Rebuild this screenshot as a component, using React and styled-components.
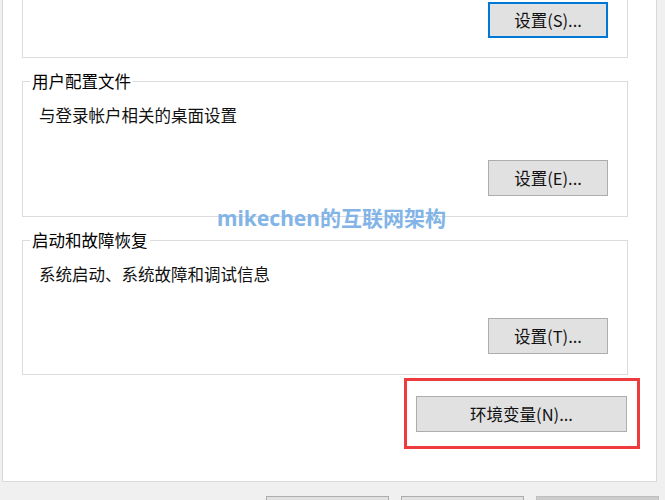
import React from "react";
import styled, { createGlobalStyle, css } from "styled-components";

const GlobalStyle = createGlobalStyle`
  html, body {
    margin: 0;
    padding: 0;
    background: #f0f0f0;
    overflow: hidden;
  }
  * { box-sizing: border-box; }
`;

const Window = styled.div`
  position: relative;
  width: 665px;
  height: 500px;
  overflow: hidden;
  padding-left: 2px;
  background: #f0f0f0;
  font-family: "Noto Sans CJK SC", "Noto Sans", sans-serif;
  font-size: 16.5px;
  line-height: 20px;
  color: #111;
`;

const TabPage = styled.div`
  width: 655px;
  height: 482px;
  background: #ffffff;
  border: 1px solid #d9d9d9;
  border-top: none;
  padding: 0 28px 0 19px;
  display: flex;
  flex-direction: column;
`;

const ClippedGroup = styled.div`
  border: 1px solid #dcdcdc;
  border-top: none;
  padding: 2px 19px 19px 16px;
  display: flex;
  justify-content: flex-end;
`;

const Group = styled.fieldset`
  margin: 13px 0 0 0;
  padding: 0;
  min-width: 0;
  border: 1px solid #dcdcdc;
`;

const Legend = styled.legend`
  margin-left: 7px;
  padding: 0 2px;
  line-height: 20px;
  color: #000;
`;

const GroupBody = styled.div`
  padding: 14px 19px 20px 16px;
  display: flex;
  flex-direction: column;
`;

const Desc = styled.div`
  line-height: 20px;
  color: #111;
`;

const ButtonRow = styled.div`
  display: flex;
  justify-content: flex-end;
  margin-top: ${(p) => p.$gap || 0}px;
`;

const Button = styled.button`
  width: ${(p) => p.$w || 120}px;
  height: 36px;
  font-family: inherit;
  font-size: 16.5px;
  line-height: 20px;
  color: #111;
  background: #e1e1e1;
  border: 1px solid #adadad;
  border-radius: 0;
  padding: 0;
  display: flex;
  align-items: center;
  justify-content: center;
  flex: none;
  ${(p) =>
    p.$focused &&
    css`
      border: 2px solid #0078d7;
    `}
  ${(p) =>
    p.$disabled &&
    css`
      background: #cccccc;
      border-color: #bfbfbf;
      color: #838383;
    `}
`;

const EnvRow = styled.div`
  display: flex;
  justify-content: flex-end;
  margin-top: 3px;
  margin-right: -12px;
`;

const Highlight = styled.div`
  border: 3px solid #ee3b3e;
  padding: 15px 10px 14px 9px;
  display: flex;
`;

const DialogButtons = styled.div`
  display: flex;
  justify-content: flex-end;
  gap: 12px;
  padding: 14px 6px 0 0;
`;

const Watermark = styled.div`
  position: absolute;
  left: 217px;
  top: 206px;
  font-family: "Noto Sans", "Noto Sans CJK SC", sans-serif;
  font-weight: 700;
  font-size: 21px;
  line-height: 24px;
  color: #82b4e7;
  white-space: nowrap;
  pointer-events: none;
`;

const sections = [
  { title: "用户配置文件", desc: "与登录帐户相关的桌面设置", btn: "设置(E)...", gap: 35 },
  { title: "启动和故障恢复", desc: "系统启动、系统故障和调试信息", btn: "设置(T)...", gap: 34 },
];

export default function App() {
  return (
    <>
      <GlobalStyle />
      <Window>
        <TabPage>
          <ClippedGroup>
            <Button $focused>设置(S)...</Button>
          </ClippedGroup>
          {sections.map((s) => (
            <Group key={s.title}>
              <Legend>{s.title}</Legend>
              <GroupBody>
                <Desc>{s.desc}</Desc>
                <ButtonRow $gap={s.gap}>
                  <Button>{s.btn}</Button>
                </ButtonRow>
              </GroupBody>
            </Group>
          ))}
          <EnvRow>
            <Highlight>
              <Button $w={211}>环境变量(N)...</Button>
            </Highlight>
          </EnvRow>
        </TabPage>
        <DialogButtons>
          <Button $w={123} aria-label="确定" />
          <Button $w={123} aria-label="取消" />
          <Button $w={123} $disabled aria-label="应用(A)" />
        </DialogButtons>
        <Watermark>mikechen的互联网架构</Watermark>
      </Window>
    </>
  );
}
